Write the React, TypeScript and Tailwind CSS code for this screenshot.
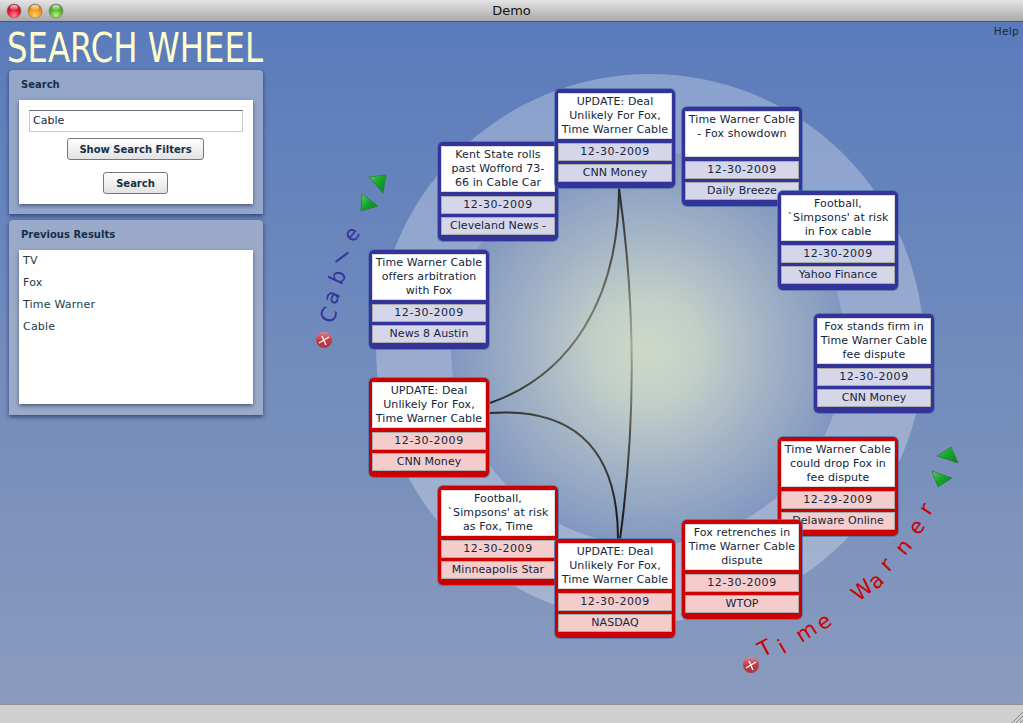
import React from "react";

const FONT = "font-['DejaVu_Sans',sans-serif]";

type CardProps = { x: number; y: number; title: string[]; date: string; source: string; red?: boolean };

function Card({ x, y, title, date, source, red }: CardProps) {
  const field = red ? "bg-[#f5cccc]" : "bg-[#d6d6ea]";
  return (
    <div
      style={{ left: x, top: y }}
      className={`absolute w-[120px] h-[99px] rounded-[5px] pt-1 px-[3px] pb-[6px] flex flex-col gap-[3px] shadow-[0_0_0_1px_rgba(70,110,170,0.7)] ${red ? "bg-[#cc0000]" : "bg-[#333399]"}`}
    >
      <div className="h-[46px] mb-[1px] bg-white border border-[#d8d8d8] flex flex-col items-center text-center pt-[1px] leading-[14px] tracking-[0.1px]">
        {title.map((t, i) => (
          <span key={i} className="whitespace-pre">{t}</span>
        ))}
      </div>
      <div className={`h-[18px] border border-[#aaaaaa] flex items-center justify-center tracking-[0.55px] ${field}`}>{date}</div>
      <div className={`h-[18px] pt-[1px] border border-[#aaaaaa] flex items-center justify-center overflow-hidden whitespace-pre tracking-[0.05px] ${field}`}>{source}</div>
    </div>
  );
}

function Arrow({ points }: { points: string }) {
  return <polygon points={points} fill="url(#arrowGrad)" stroke="#2f7a3a" strokeWidth="1" strokeDasharray="2 0.6" strokeLinejoin="round" />;
}

function CloseBtn({ cx, cy }: { cx: number; cy: number }) {
  return (
    <g>
      <circle cx={cx} cy={cy} r="8" fill="url(#closeGrad)" />
      <path d={`M${cx - 5} ${cy + 3}L${cx + 5} ${cy - 3}M${cx - 2} ${cy - 4}L${cx + 2} ${cy + 5}`} stroke="#fff" strokeWidth="1.3" />
    </g>
  );
}

const cableLetters: [string, number, number, number][] = [
  ["C", 335, 318, -65],
  ["a", 338, 300, -65],
  ["b", 344, 280, -65],
  ["l", 335.4, 262.2, 53],
  ["e", 357, 238.5, -50],
];
const twLetters: [string, number, number, number][] = [
  ["T", 768.5, 654.6, -28],
  ["i", 785.5, 653, -30],
  ["m", 810, 637.6, -33],
  ["e", 828, 627.4, -36],
  ["W", 866.8, 595.7, -40],
  ["a", 880.8, 586, -44],
  ["r", 891.6, 569.5, -46],
  ["n", 909, 551.5, -50],
  ["e", 922.4, 531, -54],
  ["r", 932, 512.6, -58],
];

function Light({ cx, c1, c2, c3 }: { cx: number; c1: string; c2: string; c3: string }) {
  const id = `l${cx}`;
  return (
    <g>
      <defs>
        <radialGradient id={id} cx="50%" cy="80%" r="70%">
          <stop offset="0%" stopColor={c1} />
          <stop offset="60%" stopColor={c2} />
          <stop offset="100%" stopColor={c3} />
        </radialGradient>
        <linearGradient id={`${id}h`} x1="0" y1="0" x2="0" y2="1">
          <stop offset="0%" stopColor="#fff" stopOpacity="0.85" />
          <stop offset="100%" stopColor="#fff" stopOpacity="0.1" />
        </linearGradient>
      </defs>
      <circle cx={cx} cy="8" r="7" fill={`url(#${id})`} stroke="#777" strokeWidth="0.6" />
      <ellipse cx={cx} cy="4.5" rx="4" ry="2.6" fill={`url(#${id}h)`} />
    </g>
  );
}

export default function App() {
  return (
    <div className={`w-[1023px] h-[723px] overflow-hidden flex flex-col text-[11px] text-[#14263a] ${FONT}`}>
      <div className="relative h-[22px] shrink-0 flex items-center justify-center bg-gradient-to-b from-[#e4e4e4] to-[#a9a9a9] border-b border-[#555555]">
        <svg className="absolute left-0 top-[3px] w-[70px] h-[16px]" viewBox="0 0 70 16">
          <Light cx={14} c1="#ff8a9a" c2="#e8152f" c3="#b80a20" />
          <Light cx={35} c1="#ffd070" c2="#f39a1a" c3="#c87a12" />
          <Light cx={56} c1="#b4ef80" c2="#58b82c" c3="#3d8f1d" />
        </svg>
        <span className="text-[13px] text-[#111]">Demo</span>
      </div>

      <div className="relative flex-1 bg-gradient-to-b from-[#5a7bbb] to-[#8a9bbd]">
        <svg className="absolute left-0 top-[-22px] w-[1023px] h-[723px]" viewBox="0 0 1023 723">
          <defs>
            <radialGradient id="disc" gradientUnits="userSpaceOnUse" cx="648" cy="350" r="200">
              <stop offset="0%" stopColor="#cdd8c8" />
              <stop offset="25%" stopColor="#c3d0c8" />
              <stop offset="60%" stopColor="#a3b3c6" />
              <stop offset="100%" stopColor="#7f96bf" />
            </radialGradient>
            <radialGradient id="lineGrad" gradientUnits="userSpaceOnUse" cx="630" cy="345" r="170">
              <stop offset="0%" stopColor="#a8a890" />
              <stop offset="50%" stopColor="#55554c" />
              <stop offset="100%" stopColor="#1e1e1e" />
            </radialGradient>
            <linearGradient id="closeGrad" x1="0" y1="0" x2="0" y2="1">
              <stop offset="0%" stopColor="#d98a90" />
              <stop offset="50%" stopColor="#c43a44" />
              <stop offset="100%" stopColor="#a83840" />
            </linearGradient>
            <linearGradient id="arrowGrad" x1="0" y1="0" x2="1" y2="1">
              <stop offset="0%" stopColor="#6cc96c" />
              <stop offset="45%" stopColor="#14a82c" />
              <stop offset="100%" stopColor="#08801c" />
            </linearGradient>
          </defs>
          <circle cx="650" cy="348" r="274" fill="#ffffff" fillOpacity="0.28" />
          <circle cx="648" cy="348" r="197" fill="url(#disc)" />
          <g fill="none" stroke="url(#lineGrad)" strokeWidth="2">
            <path d="M619 188C619 300 570 375 490 403" />
            <path d="M619 188Q644 364 620 539" />
            <path d="M490 413C565 408 618 440 618 539" />
          </g>
          <g fontSize="21" fill="#333399" fontFamily="'DejaVu Sans',sans-serif">
            {cableLetters.map(([c, x, y, r], i) => (
              <text key={i} x={x} y={y} textAnchor="middle" transform={`rotate(${r} ${x} ${y})`}>{c}</text>
            ))}
          </g>
          <g fontSize="21" fill="#cc0000" fontFamily="'DejaVu Sans',sans-serif">
            {twLetters.map(([c, x, y, r], i) => (
              <text key={i} x={x} y={y} textAnchor="middle" transform={`rotate(${r} ${x} ${y})`}>{c}</text>
            ))}
          </g>
          <Arrow points="369,177 386,175 383,193" />
          <Arrow points="362,194 378,206 361,211" />
          <Arrow points="937,456 951,447 958,463" />
          <Arrow points="932,471 952,478 938,487" />
          <CloseBtn cx={324} cy={340} />
          <CloseBtn cx={751} cy={665} />
        </svg>

        <div className="absolute right-[4px] top-[2px] text-[#1a2a3a] text-[10.5px] tracking-[0.3px]">Help</div>

        <Card x={438} y={142 - 22} title={["Kent State rolls", "past Wofford 73-", "66 in Cable Car"]} date="12-30-2009" source="Cleveland News -" />
        <Card x={555} y={89 - 22} title={["UPDATE: Deal", "Unlikely For Fox,", "Time Warner Cable"]} date="12-30-2009" source="CNN Money" />
        <Card x={682} y={107 - 22} title={["Time Warner Cable", "- Fox showdown"]} date="12-30-2009" source="Daily Breeze" />
        <Card x={778} y={191 - 22} title={["Football,", "`Simpsons' at risk", "in Fox cable"]} date="12-30-2009" source="Yahoo Finance" />
        <Card x={814} y={314 - 22} title={["Fox stands firm in", "Time Warner Cable", "fee dispute"]} date="12-30-2009" source="CNN Money" />
        <Card x={369} y={250 - 22} title={["Time Warner Cable", "offers arbitration", "with Fox"]} date="12-30-2009" source="News 8 Austin" />
        <Card red x={369} y={378 - 22} title={["UPDATE: Deal", "Unlikely For Fox,", "Time Warner Cable"]} date="12-30-2009" source="CNN Money" />
        <Card red x={778} y={437 - 22} title={["Time Warner Cable", "could drop Fox in", "fee dispute"]} date="12-29-2009" source="Delaware Online" />
        <Card red x={682} y={520 - 22} title={["Fox retrenches in", "Time Warner Cable", "dispute"]} date="12-30-2009" source="WTOP" />
        <Card red x={438} y={486 - 22} title={["Football,", "`Simpsons' at risk", "as Fox, Time"]} date="12-30-2009" source="Minneapolis Star" />
        <Card red x={555} y={539 - 22} title={["UPDATE: Deal", "Unlikely For Fox,", "Time Warner Cable"]} date="12-30-2009" source="NASDAQ" />

        <div className="relative w-[272px] pl-[9px] flex flex-col">
          <h1 className="h-[48px] -ml-[2px] text-[41px] leading-[52px] text-[#ffffcc] font-normal whitespace-pre origin-left scale-x-[0.876] [font-stretch:condensed] font-['DejaVu_Sans_Condensed','DejaVu_Sans',sans-serif]">SEARCH WHEEL</h1>
          <section className="w-[254px] h-[144px] rounded-t-[4px] bg-[#94a5ca] px-[10px] shadow-[0_2px_4px_rgba(30,40,80,0.7)]">
            <h2 className="h-[30px] pl-[2px] pt-[8px] font-bold text-[10px] text-[#143048] leading-[14px]">Search</h2>
            <div className="h-[104px] bg-white shadow-[0_2px_4px_rgba(30,40,80,0.6)] flex flex-col items-center pt-[10px]">
              <div className="w-[214px] h-[22px] border border-[#c8c8c8] border-t-[#707070] flex items-center pl-[3px]">Cable</div>
              <button className="mt-[6px] -ml-[1px] w-[137px] h-[22px] rounded-[3px] border border-[#777] bg-gradient-to-b from-white to-[#e2e2e2] font-bold text-[10px] text-[#143048]">Show Search Filters</button>
              <button className="mt-[12px] -ml-[1px] w-[65px] h-[22px] rounded-[3px] border border-[#777] bg-gradient-to-b from-white to-[#e2e2e2] font-bold text-[10px] text-[#143048]">Search</button>
            </div>
          </section>
          <section className="mt-[6px] w-[254px] h-[195px] rounded-t-[4px] bg-[#9baac9] px-[10px] shadow-[0_2px_4px_rgba(30,40,80,0.7)]">
            <h2 className="h-[30px] pl-[2px] pt-[8px] font-bold text-[10px] text-[#143048] leading-[14px]">Previous Results</h2>
            <ul className="h-[154px] bg-white shadow-[0_2px_4px_rgba(30,40,80,0.6)] pl-[4px] pt-[4px] text-[#1c3a48] tracking-[0.2px] flex flex-col">
              <li className="h-[22px] leading-[14px]">TV</li>
              <li className="h-[22px] leading-[14px]">Fox</li>
              <li className="h-[22px] leading-[14px]">Time Warner</li>
              <li className="h-[22px] leading-[14px]">Cable</li>
            </ul>
          </section>
        </div>
      </div>

      <div className="relative h-[19px] shrink-0 bg-[#cfcfcf] border-t border-[#8f8f8f]">
        <svg className="absolute right-0 bottom-0 w-[12px] h-[12px]" viewBox="0 0 12 12">
          <path d="M1 12L12 1M5 12L12 5M9 12L12 9" stroke="#8a8a8a" strokeWidth="1" fill="none" />
        </svg>
      </div>
    </div>
  );
}
